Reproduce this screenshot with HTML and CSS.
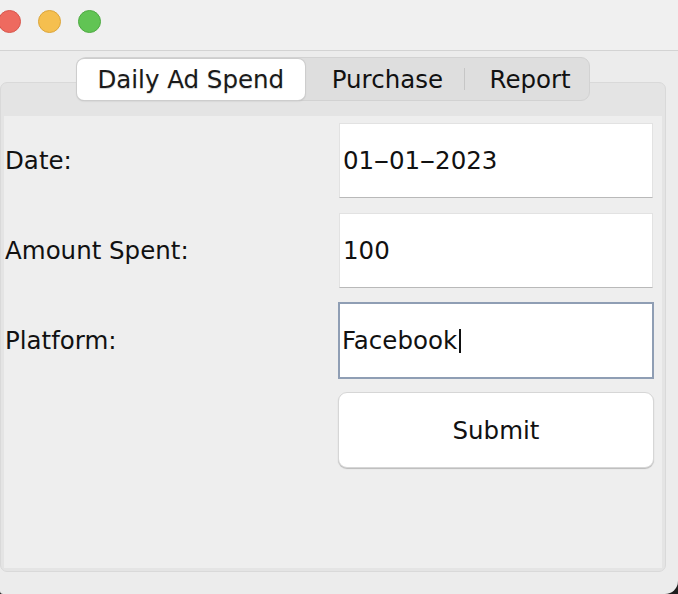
FILE: index.html
```html
<!DOCTYPE html>
<html>
<head>
<meta charset="utf-8">
<title>Daily Ad Spend</title>
<link rel="stylesheet" href="styles.css">
</head>
<body>
<div class="window">
  <div class="titlebar">
    <span class="light red"></span>
    <span class="light yellow"></span>
    <span class="light green"></span>
  </div>
  <div class="main">
    <div class="tabs">
      <div class="tab tab-daily selected">Daily Ad Spend</div>
      <div class="tab tab-purchase">Purchase</div>
      <div class="tab-divider"></div>
      <div class="tab tab-report">Report</div>
    </div>
    <div class="panel">
      <div class="content">
        <div class="row row-1">
          <div class="label">Date:</div>
          <div class="field">01<span class="dash">-</span>01<span class="dash">-</span>2023</div>
        </div>
        <div class="row row-2">
          <div class="label">Amount Spent:</div>
          <div class="field">100</div>
        </div>
        <div class="row row-3">
          <div class="label">Platform:</div>
          <div class="field focused">Facebook<span class="caret"></span></div>
        </div>
        <div class="row row-4">
          <div class="label"></div>
          <div class="button">Submit</div>
        </div>
      </div>
    </div>
  </div>
</div>
</body>
</html>
```

FILE: styles.css
```css
* { box-sizing: border-box; }

html {
  background: #1d1d1d;
}

body {
  margin: 0;
  width: 678px;
  height: 594px;
  overflow: hidden;
  font-family: "DejaVu Sans", "Liberation Sans", sans-serif;
  font-size: 24.5px;
  color: #111;
}

.window {
  width: 678px;
  height: 594px;
  background: #ececec;
  border-bottom-right-radius: 13px;
  border-bottom-left-radius: 3px;
  overflow: hidden;
}

.titlebar {
  height: 51px;
  background: #f0f0f0;
  border-bottom: 1px solid #d3d3d3;
  display: flex;
  align-items: center;
  gap: 17px;
  margin-left: -2px;
  padding-bottom: 7px;
}

.light {
  width: 23px;
  height: 23px;
  border-radius: 50%;
  display: block;
}
.red { background: #ee6a5f; border: 1px solid #d8574d; }
.yellow { background: #f5bf4f; border: 1px solid #dca53a; }
.green { background: #61c454; border: 1px solid #4eaa42; }

.main {
  padding-top: 6px;
}

.tabs {
  position: relative;
  z-index: 1;
  margin-left: 77px;
  width: 513px;
  height: 44px;
  background: #dedede;
  border: 1px solid #d2d2d2;
  border-radius: 9px;
  display: flex;
  align-items: center;
}

.tab {
  height: 41px;
  display: flex;
  align-items: center;
  justify-content: center;
  color: #111;
}

.tab-daily { width: 228px; margin-left: -1px; }
.tab-purchase { width: 160px; padding-left: 6px; }
.tab-report { width: 124px; padding-left: 6px; }

.tab.selected {
  background: #ffffff;
  border-radius: 7px;
  box-shadow: 0 0 0 1px #cdcdcd, 0 1px 2px rgba(0,0,0,0.18);
  color: #1a1a1a;
  text-shadow: 0 1px 1px rgba(0,0,0,0.18);
}

.tab-divider {
  width: 1px;
  height: 22px;
  background: #c6c6c6;
}

.panel {
  margin-top: -19px;
  width: 666px;
  height: 490px;
  background: #e4e4e4;
  border: 1px solid #d9d9d9;
  border-radius: 7px;
  padding: 33px 3px 3px 3px;
}

.content {
  height: 100%;
  background: #eeeeee;
  padding: 7px 0 0 1px;
  display: flex;
  flex-direction: column;
}

.row {
  display: flex;
  align-items: center;
}

.row-1 { height: 75px; }
.row-2 { height: 75px; margin-top: 15px; }
.row-3 { height: 77px; margin-top: 14px; }
.row-4 { height: 76px; margin-top: 13px; }

.label {
  width: 334px;
  color: #111;
}

.field {
  width: 314px;
  height: 75px;
  background: #ffffff;
  border: 1px solid #e2e2e2;
  border-bottom: 1px solid #b9b9b9;
  padding-left: 3px;
  display: flex;
  align-items: center;
  color: #111;
  white-space: pre;
}

.dash {
  display: inline-block;
  transform: scaleX(1.9);
  margin: 0 3px;
}

.field.focused {
  width: 316px;
  height: 77px;
  margin-left: -1px;
  border: 2px solid #8f9eb4;
  padding-left: 2px;
}

.caret {
  display: inline-block;
  width: 2px;
  height: 24px;
  background: #111;
  margin-left: 2px;
}

.button {
  width: 316px;
  height: 76px;
  margin-left: -1px;
  background: #ffffff;
  border: 1px solid #d6d6d6;
  border-radius: 9px;
  box-shadow: 0 1px 1px rgba(0,0,0,0.22);
  display: flex;
  align-items: center;
  justify-content: center;
  color: #111;
}
```
